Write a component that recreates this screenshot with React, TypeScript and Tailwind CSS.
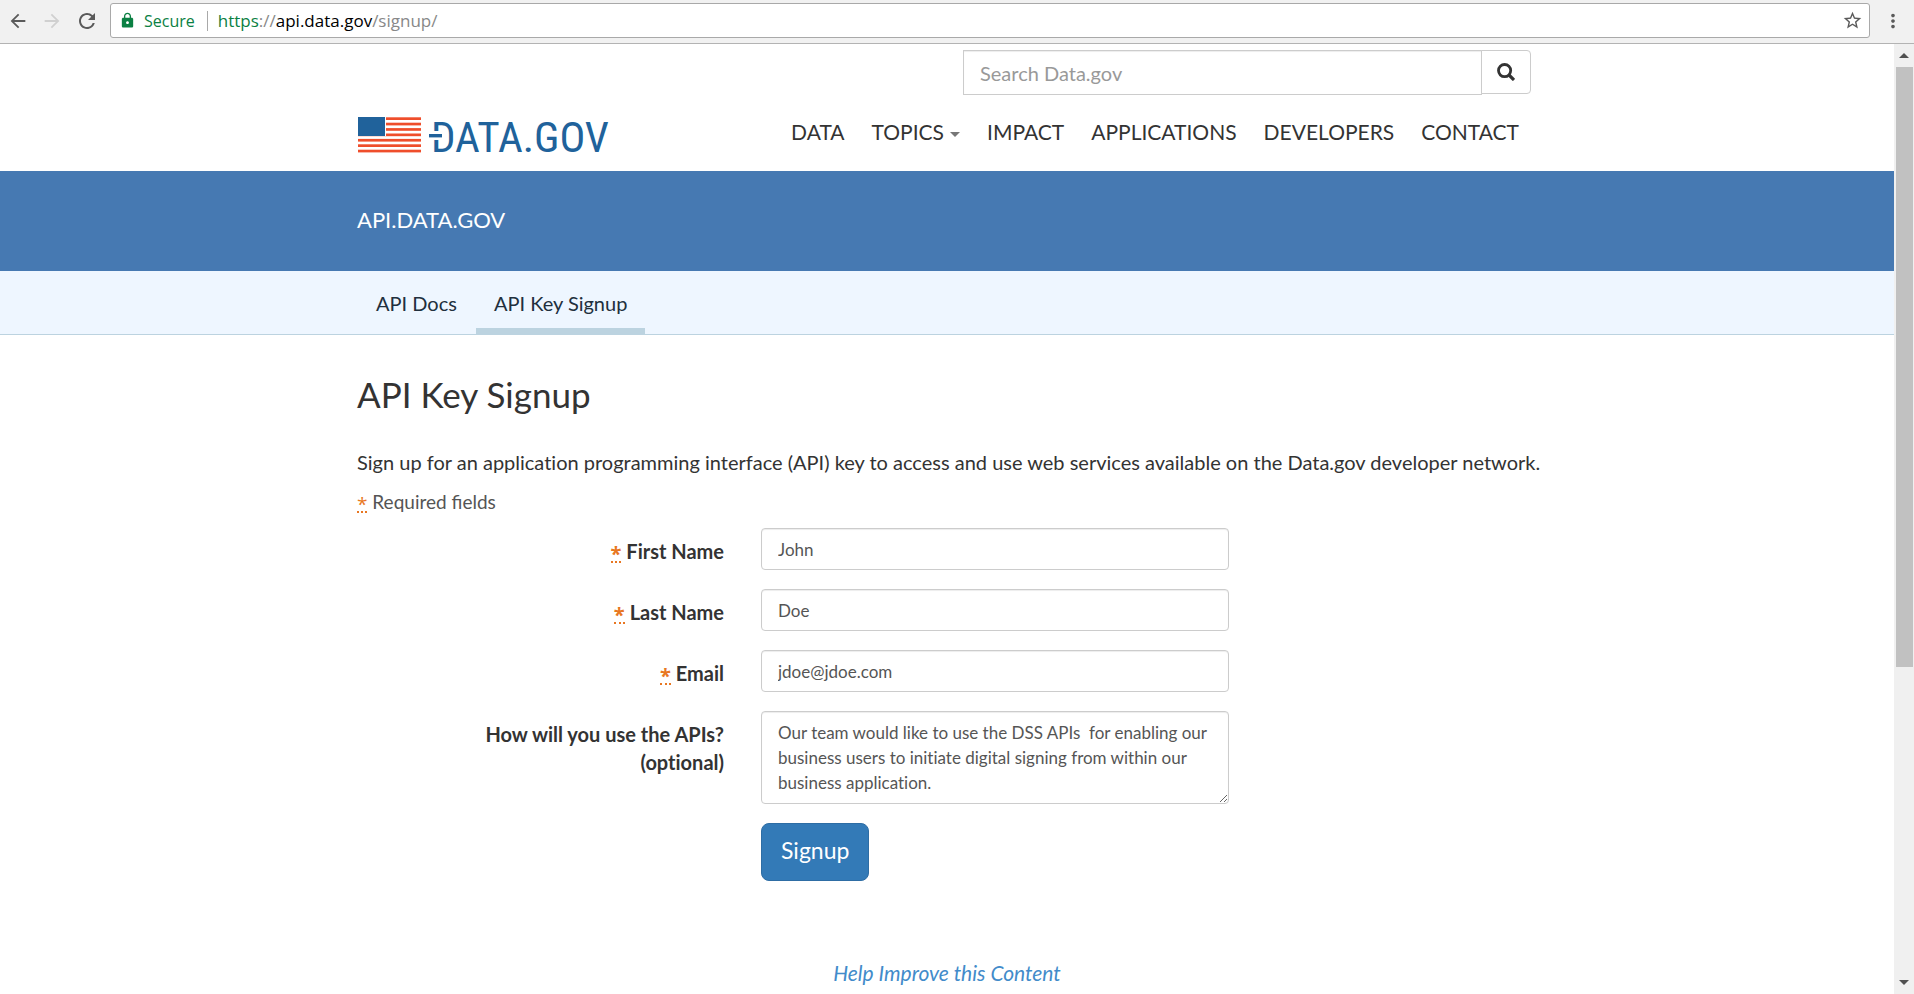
import React from "react";
import {
  MdArrowBack,
  MdArrowForward,
  MdLock,
  MdMoreVert,
  MdRefresh,
  MdStarBorder,
} from "react-icons/md";

const container = "mx-auto w-full max-w-[1180px]";
const control =
  "block w-full rounded border border-[#ccc] bg-white px-4 text-[17px] leading-[25px] text-[#555] shadow-[inset_0_1px_1px_rgba(0,0,0,0.075)] outline-none focus:border-[#66afe9]";

function BrowserBar() {
  return (
    <div className="flex h-11 shrink-0 items-start border-b border-[#b3b3b3] bg-[#f1f1f1] pl-1.5 pt-[3px] text-[#5a5a5a]">
      <div className="flex h-[35px] items-center">
        <button type="button" aria-label="Back" className="p-px">
          <MdArrowBack size={22} />
        </button>
        <button type="button" aria-label="Forward" className="ml-2.5 p-px text-[#d0d0d0]">
          <MdArrowForward size={22} />
        </button>
        <button type="button" aria-label="Reload" className="ml-2.5 p-px">
          <MdRefresh size={24} />
        </button>
      </div>
      <div className="ml-2.5 flex h-[35px] min-w-0 flex-1 items-center rounded-[3px] border border-[#a9a9a9] bg-white pl-2 pr-1.5 font-['Open_Sans','Noto_Sans',sans-serif] text-[17px]">
        <MdLock size={17} className="text-[#0b8043]" />
        <span className="ml-2 text-[16px] text-[#0b8043]">Secure</span>
        <span className="ml-3 h-5 w-px bg-[#a9a9a9]" />
        <span className="ml-2.5 flex-1 text-[#888]">
          <span className="text-[#0b8043]">https</span>://<span className="text-black">api.data.gov</span>/signup/
        </span>
        <button type="button" aria-label="Bookmark this page">
          <MdStarBorder size={21} />
        </button>
      </div>
      <button type="button" aria-label="Menu" className="ml-3 mr-2.5 flex h-[35px] items-center">
        <MdMoreVert size={22} />
      </button>
    </div>
  );
}

function Logo() {
  return (
    <svg width="254" height="38" viewBox="0 0 254 38" className="overflow-visible" role="img" aria-label="Data.gov">
      <g fill="#ef4e2b">
        {[0, 1, 2, 3, 4, 5, 6].map((i) => (
          <rect key={i} x="1" y={0.3 + 5.4 * i} width="63" height="2.7" />
        ))}
      </g>
      <rect x="1" y="0" width="27" height="19" fill="#20629b" />
      <rect x="28" y="0" width="1" height="19" fill="#fff" />
      <text
        x="74"
        y="35"
        fill="#20629b"
        className="font-['Liberation_Sans_Narrow','Roboto_Condensed',Roboto,sans-serif] text-[43px] font-normal"
      >
        DATA.GOV
      </text>
      <rect x="70" y="14" width="15" height="9" fill="#fff" />
      <rect x="72" y="17" width="13" height="3.4" fill="#20629b" />
    </svg>
  );
}

function SearchIcon() {
  return (
    <svg width="18" height="18" viewBox="0 0 18 18" fill="none" stroke="#333" aria-hidden="true">
      <circle cx="7.6" cy="7.6" r="6.1" strokeWidth="2.8" />
      <path d="M12 12l5 5" strokeWidth="3.2" />
    </svg>
  );
}

const navItems = ["DATA", "TOPICS", "IMPACT", "APPLICATIONS", "DEVELOPERS", "CONTACT"];

function SiteHeader() {
  return (
    <header className={`${container} flex items-end justify-between pt-1.5 pb-4`}>
      <a href="#home">
        <Logo />
      </a>
      <div className="flex flex-col items-end">
        <form className="mr-1.5 flex w-[568px] items-start" role="search" onSubmit={(e) => e.preventDefault()}>
          <input
            type="text"
            aria-label="Search Data.gov"
            placeholder="Search Data.gov"
            className="h-[45px] min-w-0 flex-1 border border-[#ccc] px-4 text-[20px] text-[#555] shadow-[inset_0_1px_1px_rgba(0,0,0,0.075)] outline-none placeholder:text-[#999]"
          />
          <button
            type="button"
            aria-label="Search"
            className="-ml-px flex h-11 w-[50px] items-center justify-center rounded-r border border-[#ccc] bg-white"
          >
            <SearchIcon />
          </button>
        </form>
        <nav className="mr-[18px] mt-[23px] flex gap-[27px] pb-[9px] text-[21px] leading-7 text-[#333]">
          {navItems.map((item) => (
            <a key={item} href={`#${item.toLowerCase()}`} className="flex items-center">
              {item}
              {item === "TOPICS" && (
                <svg width="10" height="5" viewBox="0 0 10 5" className="ml-1.5 mt-1" aria-hidden="true">
                  <path d="M0 0h10L5 5z" fill="#777" />
                </svg>
              )}
            </a>
          ))}
        </nav>
      </div>
    </header>
  );
}

function RequiredMark() {
  return (
    <abbr
      title="required"
      className="inline-block border-b-2 border-dotted border-[#e87722] align-[-2px] font-['Open_Sans',sans-serif] leading-[14px] text-[#e87722] no-underline"
    >
      *
    </abbr>
  );
}

function FieldLabel({ id, required, children }: { id: string; required?: boolean; children: React.ReactNode }) {
  return (
    <label htmlFor={id} className="pt-[9px] text-right text-[20px] font-bold leading-7">
      {required && (
        <>
          <RequiredMark />{" "}
        </>
      )}
      {children}
    </label>
  );
}

const fields = [
  { id: "first-name", label: "First Name", type: "text", value: "John" },
  { id: "last-name", label: "Last Name", type: "text", value: "Doe" },
  { id: "email", label: "Email", type: "email", value: "jdoe@jdoe.com" },
];

function SignupForm() {
  return (
    <form
      className="grid grid-cols-[367px_minmax(0,468px)] gap-x-[37px] gap-y-[19px]"
      onSubmit={(e) => e.preventDefault()}
    >
      {fields.map((f) => (
        <React.Fragment key={f.id}>
          <FieldLabel id={f.id} required>
            {f.label}
          </FieldLabel>
          <input id={f.id} type={f.type} defaultValue={f.value} className={`${control} h-[42px]`} />
        </React.Fragment>
      ))}
      <FieldLabel id="use">
        How will you use the APIs?
        <br />
        (optional)
      </FieldLabel>
      <textarea
        id="use"
        rows={3}
        className={`${control} h-[93px] resize overflow-hidden py-2`}
        defaultValue="Our team would like to use the DSS APIs  for enabling our business users to initiate digital signing from within our business application."
      />
      <button
        type="submit"
        className="col-start-2 h-[58px] justify-self-start rounded-lg border border-[#2e6da4] bg-[#337ab7] px-[19px] pb-1 text-[23px] text-white"
      >
        Signup
      </button>
    </form>
  );
}

function ScrollTrack() {
  return (
    <div className="flex w-5 shrink-0 flex-col items-center bg-[#f0f0f0] py-[9px]" aria-hidden="true">
      <svg width="10" height="5" viewBox="0 0 10 5">
        <path d="M0 5h10L5 0z" fill="#505050" />
      </svg>
      <div className="mb-auto mt-[9px] h-[600px] w-[17px] bg-[#c1c1c1]" />
      <svg width="10" height="5" viewBox="0 0 10 5">
        <path d="M0 0h10L5 5z" fill="#505050" />
      </svg>
    </div>
  );
}

export default function App() {
  return (
    <div className="flex min-h-screen flex-col bg-white font-[Lato,sans-serif] text-[#333] [font-variant-ligatures:no-common-ligatures]">
      <BrowserBar />
      <div className="flex flex-1">
        <div className="min-w-0 flex-1">
          <SiteHeader />
          <div className="bg-[#4679b2]">
            <div className={`${container} flex h-[100px] items-center pb-1`}>
              <a href="#api" className="text-[22px] text-white">
                API.DATA.GOV
              </a>
            </div>
          </div>
          <div className="border-b border-[#bcd3e0] bg-[#eef6ff]">
            <nav className={`${container} flex h-[63px] text-[20px] leading-7 text-[#212f3d]`}>
              <a href="#docs" className="px-[19px] pt-[18px]">
                API Docs
              </a>
              <a href="#signup" className="border-b-[6px] border-[#bcd3e0] px-[18px] pt-[18px]">
                API Key Signup
              </a>
            </nav>
          </div>
          <main className={`${container} pt-[35px]`}>
            <h1 className="text-[35px] leading-[48px]">API Key Signup</h1>
            <p className="mt-[30px] text-[20px] leading-7 xl:whitespace-nowrap">
              Sign up for an application programming interface (API) key to access and use web services available on the
              Data.gov developer network.
            </p>
            <p className="my-3 text-[19px] leading-7 text-[#555] [font-variant-ligatures:normal]">
              <RequiredMark /> Required fields
            </p>
            <SignupForm />
          </main>
          <footer className="mt-[78px] pb-1.5 text-center">
            <a href="#improve" className="text-[21px] italic leading-7 text-[#428bca]">
              Help Improve this Content
            </a>
          </footer>
        </div>
        <ScrollTrack />
      </div>
    </div>
  );
}
